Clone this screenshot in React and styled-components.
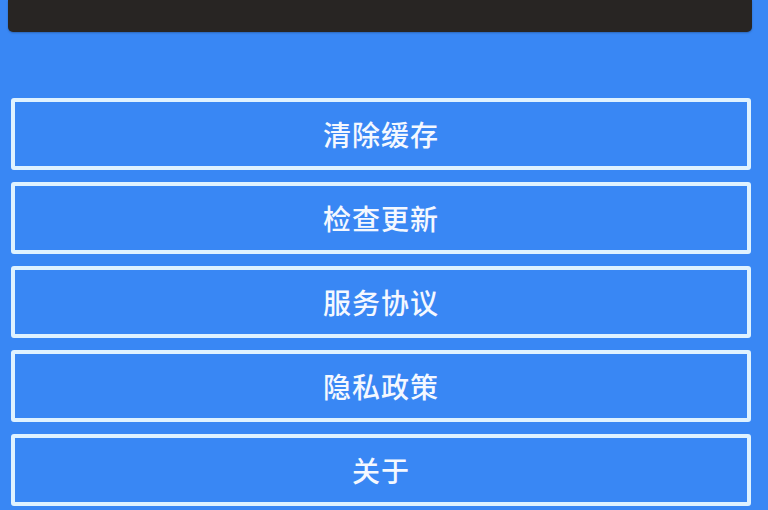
import React from "react";
import styled, { createGlobalStyle } from "styled-components";

const GlobalStyle = createGlobalStyle`
  html, body {
    margin: 0;
    padding: 0;
    background: #3987f4;
    font-family: "Noto Sans CJK SC", "Noto Sans", sans-serif;
  }
`;

const Page = styled.div`
  width: 768px;
  height: 510px;
  overflow: hidden;
  background: #3987f4;
  display: flex;
  flex-direction: column;
`;

const TopBar = styled.div`
  margin: 0 16px 0 8px;
  height: 32px;
  background: #282523;
  border-radius: 0 0 5px 5px;
  box-shadow: 0 1px 2px rgba(0, 0, 0, 0.25);
`;

const Menu = styled.div`
  display: flex;
  flex-direction: column;
  gap: 12px;
  padding: 66px 17px 0 11px;
`;

const MenuButton = styled.button`
  height: 72px;
  box-sizing: border-box;
  border: 4px solid #dff2ff;
  border-radius: 3px;
  background: #3987f4;
  color: #f4f8ff;
  font-family: inherit;
  font-size: 28px;
  font-weight: 500;
  letter-spacing: 1px;
  display: flex;
  align-items: center;
  justify-content: center;
  padding: 0;
  cursor: pointer;
`;

const items = ["清除缓存", "检查更新", "服务协议", "隐私政策", "关于"];

export default function App() {
  return (
    <Page>
      <GlobalStyle />
      <TopBar />
      <Menu>
        {items.map((label) => (
          <MenuButton key={label}>{label}</MenuButton>
        ))}
      </Menu>
    </Page>
  );
}
